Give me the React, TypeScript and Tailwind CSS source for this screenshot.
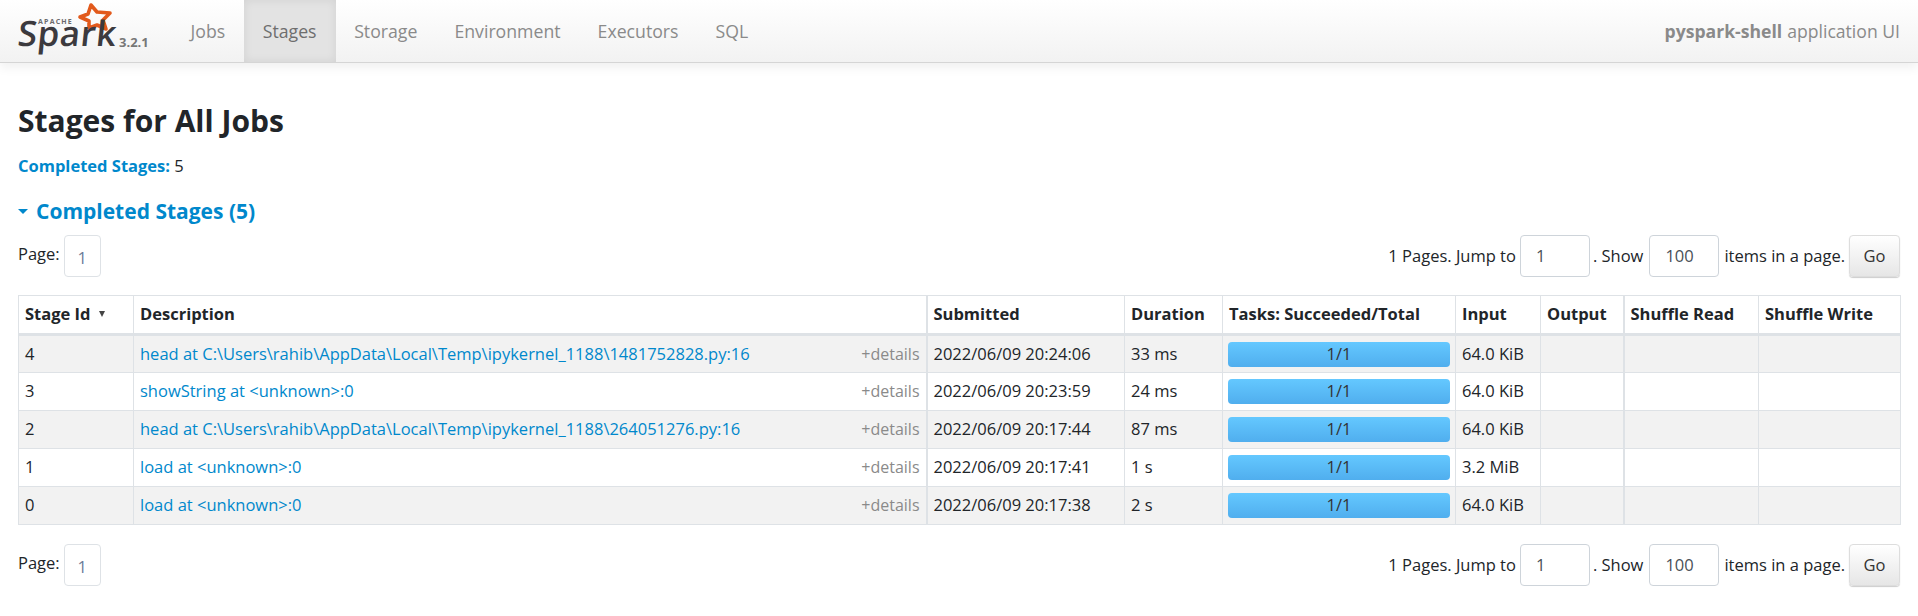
const navItems = ['Jobs', 'Stages', 'Storage', 'Environment', 'Executors', 'SQL'];

const stages = [
    {
        id: 4,
        description:
            'head at C:\\Users\\rahib\\AppData\\Local\\Temp\\ipykernel_1188\\1481752828.py:16',
        submitted: '2022/06/09 20:24:06',
        duration: '33 ms',
        input: '64.0 KiB',
    },
    {
        id: 3,
        description: 'showString at <unknown>:0',
        submitted: '2022/06/09 20:23:59',
        duration: '24 ms',
        input: '64.0 KiB',
    },
    {
        id: 2,
        description:
            'head at C:\\Users\\rahib\\AppData\\Local\\Temp\\ipykernel_1188\\264051276.py:16',
        submitted: '2022/06/09 20:17:44',
        duration: '87 ms',
        input: '64.0 KiB',
    },
    {
        id: 1,
        description: 'load at <unknown>:0',
        submitted: '2022/06/09 20:17:41',
        duration: '1 s',
        input: '3.2 MiB',
    },
    {
        id: 0,
        description: 'load at <unknown>:0',
        submitted: '2022/06/09 20:17:38',
        duration: '2 s',
        input: '64.0 KiB',
    },
];

function SparkLogo() {
    return (
        <div className="relative h-[62px] w-[100px] shrink-0">
            <svg
                className="absolute top-0 left-[62px]"
                width="42"
                height="34"
                viewBox="0 0 42 34"
            >
                <path
                    d="M17 5 L23 12 L36 13 L29 20 L32 29 L23 25 L15 28 L15 21 L6 17 L14 14 Z"
                    fill="none"
                    stroke="#e25a1c"
                    strokeWidth="3.6"
                    strokeLinejoin="round"
                />
            </svg>
            <span className="absolute top-[20px] left-[26px] text-[7px] leading-[4px] font-bold tracking-[1.2px] text-[#6b6a6c]">
                APACHE
            </span>
            <span className="absolute top-[26px] left-[6px] -skew-x-6 text-[35px] leading-[14px] font-semibold tracking-[0.5px] text-[#3c3a3e]">
                Spark
            </span>
        </div>
    );
}

function Pager() {
    return (
        <div className="flex h-[42px] items-start justify-between">
            <div className="flex items-start">
                <span className="mt-[7px] mr-[4px]">Page:</span>
                <span className="flex h-[42px] w-[37px] items-center justify-center rounded-[4px] border border-[#dee2e6] pt-1 text-[#6c7c98]">
                    1
                </span>
            </div>
            <div className="flex items-center">
                <span>1 Pages. Jump to</span>
                <span className="ml-1 flex h-[42px] w-[70px] items-center rounded-[4px] border border-[#ced4da] pl-[15px] text-[#495057]">
                    1
                </span>
                <span className="ml-[3px]">. Show</span>
                <span className="ml-[6px] flex h-[42px] w-[70px] items-center rounded-[4px] border border-[#ced4da] pl-[15px] text-[#495057]">
                    100
                </span>
                <span className="ml-[5px]">items in a page.</span>
                <button className="ml-1 h-[42px] w-[51px] rounded-[4px] border border-[#ddd] bg-linear-to-b from-white to-[#e6e6e6] text-[#333] shadow-[0_1px_1px_rgba(0,0,0,0.2)]">
                    Go
                </button>
            </div>
        </div>
    );
}

export default function App() {
    return (
        <div className="min-h-[616px] bg-white font-['Open_Sans',sans-serif] text-[16.5px] text-[#212529]">
            <nav className="flex h-[63px] items-stretch border-b border-[#d5d5d5] bg-linear-to-b from-white to-[#f2f2f2] pl-3 shadow-[0_5px_10px_rgba(0,0,0,0.06)]">
                <SparkLogo />
                <span className="mt-[34px] ml-[7px] w-[42px] text-[13px] leading-[16px] font-bold text-[#777]">
                    3.2.1
                </span>
                <ul className="ml-[11px] flex text-[17.7px] text-[#8a8a8a]">
                    {navItems.map((item) =>
                        item === 'Stages' ? (
                            <li
                                key={item}
                                className="flex w-[92px] items-center justify-center bg-[#e3e3e3] text-[#6e6e6e] shadow-[inset_0_0_10px_rgba(0,0,0,0.08)]"
                            >
                                {item}
                            </li>
                        ) : (
                            <li
                                key={item}
                                className="flex items-center px-[18.5px]"
                            >
                                {item}
                            </li>
                        ),
                    )}
                </ul>
                <div className="ml-auto flex items-center pr-[18px] text-[17.6px] text-[#8a8a8a]">
                    <strong className="mr-[5px] font-bold">pyspark-shell</strong>
                    application UI
                </div>
            </nav>
            <main className="px-[18px]">
                <h3 className="mt-[39px] text-[30px] leading-[38px] font-bold text-[#212529]">
                    Stages for All Jobs
                </h3>
                <p className="mt-[14px] leading-[24px]">
                    <strong className="font-bold text-[#0088cc]">
                        Completed Stages:
                    </strong>{' '}
                    5
                </p>
                <h4 className="mt-[19px] flex items-center text-[21px] leading-[28px] font-bold text-[#0088cc]">
                    <span className="mr-[8px] border-x-[5px] border-t-[5px] border-x-transparent border-t-[#0088cc]" />
                    Completed Stages (5)
                </h4>
                <div className="mt-[10px]">
                    <Pager />
                </div>
                <table className="mt-[18px] w-[1882px] table-fixed border-collapse border border-[#dee2e6]">
                    <colgroup>
                        <col className="w-[115px]" />
                        <col className="w-[793px]" />
                        <col className="w-[198px]" />
                        <col className="w-[98px]" />
                        <col className="w-[233px]" />
                        <col className="w-[85px]" />
                        <col className="w-[83px]" />
                        <col className="w-[135px]" />
                        <col className="w-[142px]" />
                    </colgroup>
                    <thead>
                        <tr className="h-[39px] border-b-[3px] border-[#dee2e6] text-left">
                            <th className="border border-[#dee2e6] px-[6px] font-bold whitespace-nowrap">
                                Stage Id
                                <span className="ml-[9px] inline-block border-x-[3.5px] border-t-[6px] border-x-transparent border-t-[#444] align-[3px]" />
                            </th>
                            <th className="border border-[#dee2e6] px-[6px] font-bold">
                                Description
                            </th>
                            <th className="border border-l-2 border-[#dee2e6] px-[6px] font-bold">
                                Submitted
                            </th>
                            <th className="border border-[#dee2e6] px-[6px] font-bold">
                                Duration
                            </th>
                            <th className="border border-[#dee2e6] px-[6px] font-bold whitespace-nowrap">
                                Tasks: Succeeded/Total
                            </th>
                            <th className="border border-[#dee2e6] px-[6px] font-bold">
                                Input
                            </th>
                            <th className="border border-[#dee2e6] px-[6px] font-bold">
                                Output
                            </th>
                            <th className="border border-l-2 border-[#dee2e6] px-[6px] font-bold">
                                Shuffle Read
                            </th>
                            <th className="border border-[#dee2e6] px-[6px] font-bold">
                                Shuffle Write
                            </th>
                        </tr>
                    </thead>
                    <tbody>
                        {stages.map((stage, i) => (
                            <tr
                                key={stage.id}
                                className={
                                    i % 2 === 0
                                        ? 'h-[38px] bg-[#f2f2f2]'
                                        : 'h-[38px] bg-white'
                                }
                            >
                                <td className="border border-[#dee2e6] px-[6px]">
                                    {stage.id}
                                </td>
                                <td className="border border-[#dee2e6] px-[6px]">
                                    <div className="flex justify-between">
                                        <span className="text-[#0088cc]">
                                            {stage.description}
                                        </span>
                                        <span className="text-[16px] text-[#8a8a8a]">
                                            +details
                                        </span>
                                    </div>
                                </td>
                                <td className="border border-l-2 border-[#dee2e6] px-[6px] whitespace-nowrap">
                                    {stage.submitted}
                                </td>
                                <td className="border border-[#dee2e6] px-[6px]">
                                    {stage.duration}
                                </td>
                                <td className="border border-[#dee2e6] px-[5px]">
                                    <div className="flex h-[25px] items-center justify-center rounded-[4px] bg-linear-to-b from-[#64c8ff] to-[#50aeee] text-[#333]">
                                        1/1
                                    </div>
                                </td>
                                <td className="border border-[#dee2e6] px-[6px]">
                                    {stage.input}
                                </td>
                                <td className="border border-[#dee2e6]" />
                                <td className="border border-l-2 border-[#dee2e6]" />
                                <td className="border border-[#dee2e6]" />
                            </tr>
                        ))}
                    </tbody>
                </table>
                <div className="mt-[19px]">
                    <Pager />
                </div>
            </main>
        </div>
    );
}
